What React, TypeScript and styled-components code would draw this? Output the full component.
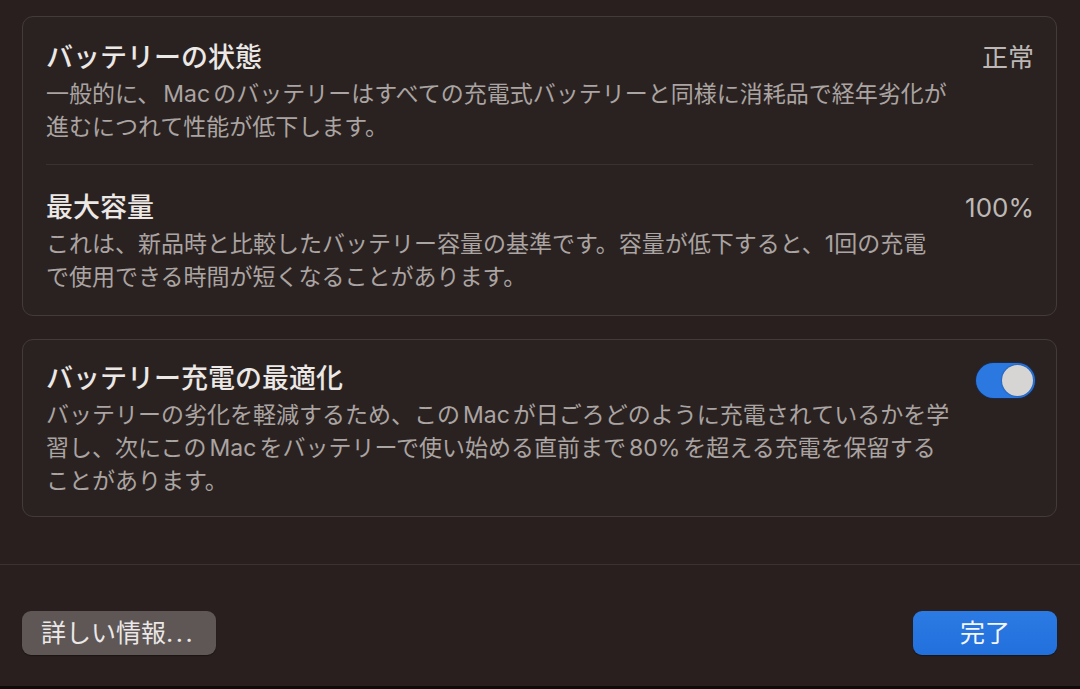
import React from "react";
import styled, { createGlobalStyle } from "styled-components";

const FONT = `"Inter", "Noto Sans CJK JP", "Noto Sans", sans-serif`;

const Global = createGlobalStyle`
  html, body { margin: 0; padding: 0; background: #281f1e; }
  body {
    font-family: ${FONT};
    -webkit-font-smoothing: antialiased;
  }
`;

const Window = styled.div`
  height: 689px;
  box-sizing: border-box;
  display: flex;
  flex-direction: column;
  background: #281f1e;
  border-bottom: 3px solid #0e0b0b;
`;

const Content = styled.div`
  display: flex;
  flex-direction: column;
  gap: 23px;
  padding: 16px 23px 0 22px;
`;

const Card = styled.div`
  border: 1px solid #433b3a;
  border-radius: 11px;
  background: #2a2221;
  padding: 0 23px;
`;

const Section = styled.div<{ $pad: string; $divider?: boolean }>`
  padding: ${(p) => p.$pad};
  border-top: ${(p) => (p.$divider ? "1px solid #3a3231" : "none")};
`;

const Head = styled.div`
  display: flex;
  justify-content: space-between;
  align-items: flex-start;
  height: 34px;
`;

const Title = styled.div`
  font-size: 27px;
  line-height: 34px;
  height: 34px;
  font-weight: 500;
  color: #ebe8e6;
  white-space: nowrap;
`;

const Value = styled.div`
  font-size: 26px;
  line-height: 34px;
  height: 34px;
  margin-right: -1px;
  color: #bdb8b6;
  white-space: nowrap;
`;

const Desc = styled.div`
  margin-top: 3px;
  font-size: 23px;
  line-height: 33px;
  color: #aaa4a2;
`;

const Line = styled.div`
  height: 33px;
  white-space: nowrap;
`;

const Latin = styled.span`
  margin: 0 3px;
`;

const Toggle = styled.div<{ $on: boolean }>`
  flex: none;
  width: 59px;
  height: 35px;
  margin-top: 1px;
  margin-right: -2px;
  border-radius: 18px;
  background: ${(p) => (p.$on ? "#2a78e0" : "#4a4342")};
  box-shadow: 0 0 0 1px #1d2a4a;
  display: flex;
  align-items: center;
  justify-content: ${(p) => (p.$on ? "flex-end" : "flex-start")};
  padding: 0 2px;
  box-sizing: border-box;
`;

const Knob = styled.div`
  width: 31px;
  height: 31px;
  border-radius: 50%;
  background: #d7d5d4;
  box-shadow: 0 0 2px rgba(0, 0, 0, 0.45);
`;

const Footer = styled.div`
  margin-top: 47px;
  border-top: 1px solid #3b3332;
  padding: 46px 23px 0 22px;
  display: flex;
  justify-content: space-between;
`;

const Button = styled.button<{ $primary?: boolean; $width: number }>`
  height: 44px;
  width: ${(p) => p.$width}px;
  padding: 0 19px;
  border: none;
  border-radius: 9px;
  font-family: ${FONT};
  font-size: 25px;
  line-height: 44px;
  white-space: nowrap;
  text-align: ${(p) => (p.$primary ? "center" : "left")};
  color: ${(p) => (p.$primary ? "#f4f6fb" : "#ebe8e7")};
  background: ${(p) =>
    p.$primary ? "linear-gradient(#2c7ae3, #2170dc)" : "#5e5756"};
  box-shadow: 0 1px 1px rgba(0, 0, 0, 0.35);
`;

const Dots = styled.span`
  letter-spacing: 2.5px;
`;

export default function App() {
  return (
    <>
      <Global />
      <Window>
        <Content>
          <Card>
            <Section $pad="24px 0 20px">
              <Head>
                <Title>バッテリーの状態</Title>
                <Value>正常</Value>
              </Head>
              <Desc>
                <Line>
                  一般的に、<Latin>Mac</Latin>のバッテリーはすべての充電式バッテリーと同様に消耗品で経年劣化が
                </Line>
                <Line>進むにつれて性能が低下します。</Line>
              </Desc>
            </Section>
            <Section $pad="26px 0 21px" $divider>
              <Head>
                <Title>最大容量</Title>
                <Value>100%</Value>
              </Head>
              <Desc>
                <Line>
                  これは、新品時と比較したバッテリー容量の基準です。容量が低下すると、1回の充電
                </Line>
                <Line>で使用できる時間が短くなることがあります。</Line>
              </Desc>
            </Section>
          </Card>
          <Card>
            <Section $pad="22px 0 18px">
              <Head>
                <Title>バッテリー充電の最適化</Title>
                <Toggle $on>
                  <Knob />
                </Toggle>
              </Head>
              <Desc>
                <Line>
                  バッテリーの劣化を軽減するため、この<Latin>Mac</Latin>が日ごろどのように充電されているかを学
                </Line>
                <Line>
                  習し、次にこの<Latin>Mac</Latin>をバッテリーで使い始める直前まで<Latin>80%</Latin>を超える充電を保留する
                </Line>
                <Line>ことがあります。</Line>
              </Desc>
            </Section>
          </Card>
        </Content>
        <Footer>
          <Button $width={194}>
            詳しい情報<Dots>...</Dots>
          </Button>
          <Button $primary $width={144}>
            完了
          </Button>
        </Footer>
      </Window>
    </>
  );
}
